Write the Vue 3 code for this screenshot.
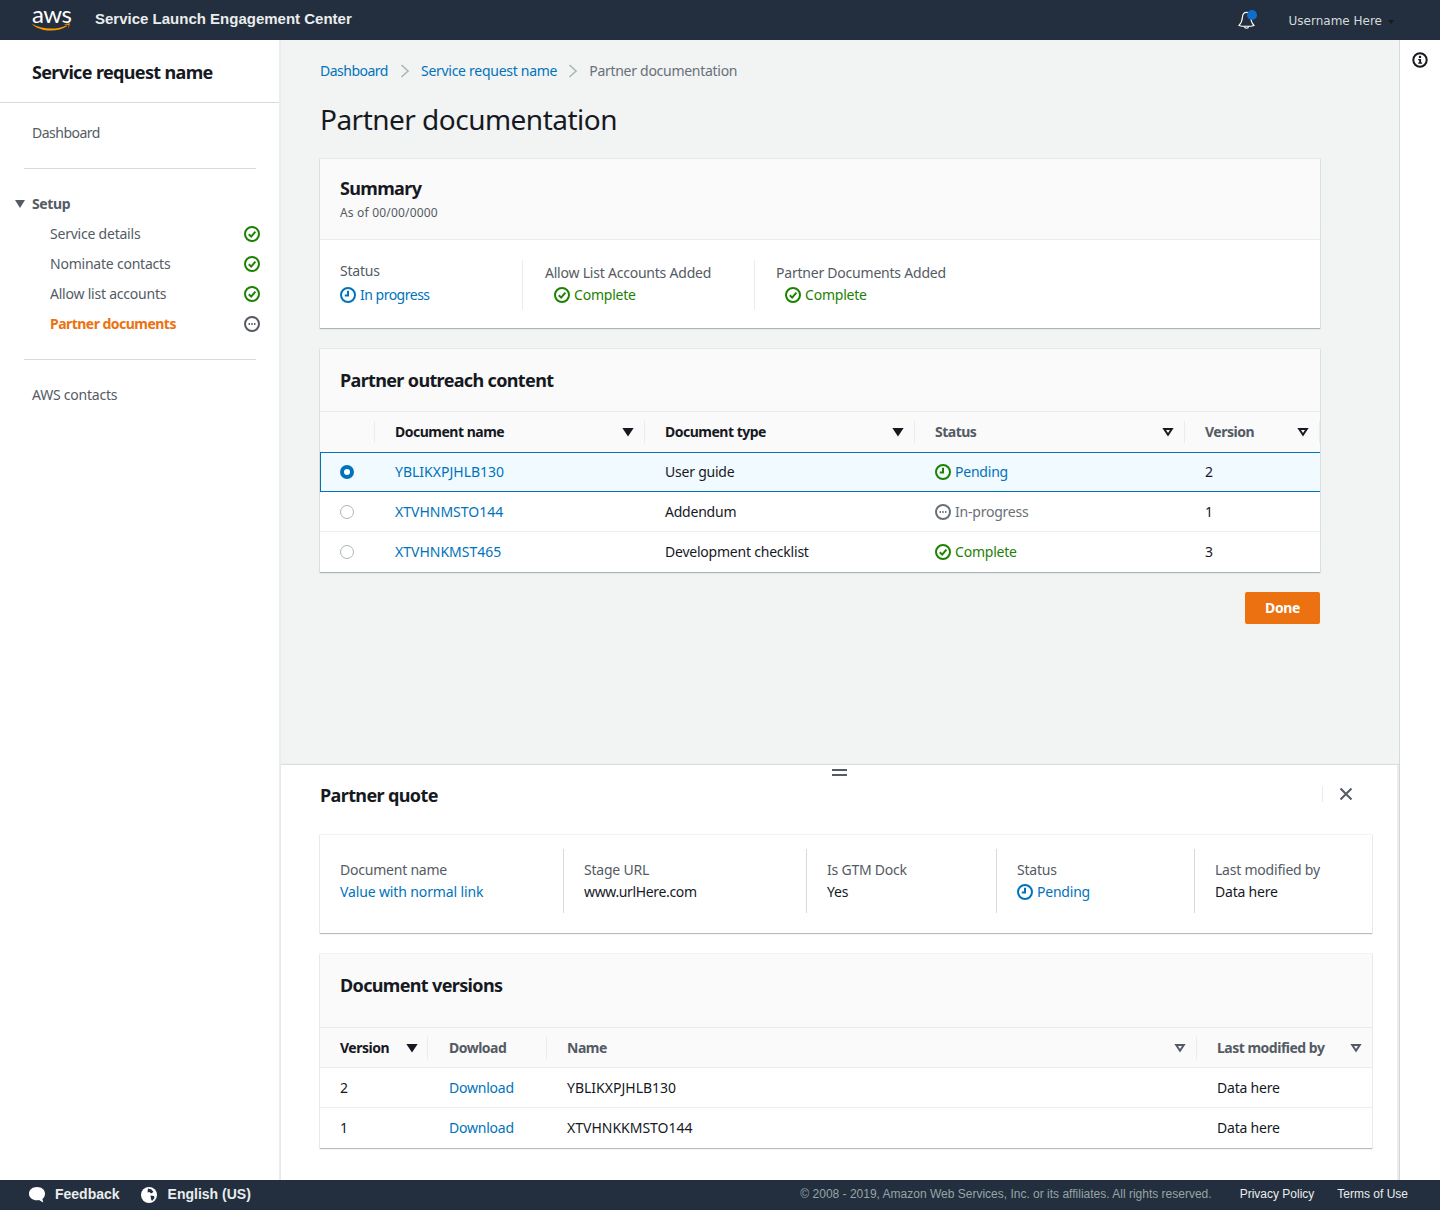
<script setup>
import { h } from 'vue'

const paths = {
  check: [['path', { d: 'M4.8 8.2 7.2 10.6 11.4 5.6' }]],
  clock: [['path', { d: 'M8 3.8V8.6H4.8' }]],
}
const colors = { green: '#1d8102', blue: '#0073bb', grey: '#687078', dark: '#545b64' }
const StatusIcon = (props) => {
  const kids = [h('circle', { cx: 8, cy: 8, r: 7 })]
  if (props.kind === 'dots') {
    kids.push(h('path', { d: 'M4.6 8h1.4M7.3 8h1.4M10 8h1.4', 'stroke-width': 1.8 }))
  } else {
    paths[props.kind].forEach(([t, a]) => kids.push(h(t, a)))
  }
  return h('svg', {
    width: 16, height: 16, viewBox: '0 0 16 16', fill: 'none',
    stroke: colors[props.color], 'stroke-width': 2, class: 'status-icon',
  }, kids)
}
const SortIcon = (props) => h('svg', {
  width: 10, height: 8, viewBox: '0 0 10 8', class: 'sort',
}, [h('path', {
  d: 'M1.200 1h7.600L5 6.800Z',
  fill: props.solid ? 'currentColor' : '#fafafa',
  stroke: 'currentColor',
  'stroke-width': 2,
})])

const setupLinks = [
  { label: 'Service details', kind: 'check', color: 'green' },
  { label: 'Nominate contacts', kind: 'check', color: 'green' },
  { label: 'Allow list accounts', kind: 'check', color: 'green' },
  { label: 'Partner documents', kind: 'dots', color: 'dark', active: true },
]
const outreachHead = [
  { label: 'Document name', solid: true, strong: true },
  { label: 'Document type', solid: true, strong: true },
  { label: 'Status', solid: false },
  { label: 'Version', solid: false },
]
const outreachRows = [
  { name: 'YBLIKXPJHLB130', type: 'User guide', status: 'Pending', kind: 'clock', icon: 'green', tone: 'blue', version: '2', selected: true },
  { name: 'XTVHNMSTO144', type: 'Addendum', status: 'In-progress', kind: 'dots', icon: 'grey', tone: 'grey', version: '1' },
  { name: 'XTVHNKMST465', type: 'Development checklist', status: 'Complete', kind: 'check', icon: 'green', tone: 'green', version: '3' },
]
const versionRows = [
  { version: '2', name: 'YBLIKXPJHLB130', by: 'Data here' },
  { version: '1', name: 'XTVHNKKMSTO144', by: 'Data here' },
]
</script>

<template>
  <div class="page">
    <header class="topbar">
      <div class="logo">
        <span class="logo-word">aws</span>
        <svg class="logo-smile" width="40" height="10" viewBox="0 0 40 10">
          <path d="M.5 1.500C10 7.500 26 8.300 35.500 3.200L36.200 4C27 10.500 9 10.500.5 1.500Z" fill="#ff9900" />
          <path d="M32.500 2.300 39 1.200 37.300 7.300 37.700 3Z" fill="#ff9900" />
        </svg>
      </div>
      <span class="app-name">Service Launch Engagement Center</span>
      <span class="spacer"></span>
      <span class="bell">
        <svg width="20" height="20" viewBox="0 0 20 20" fill="none" stroke="#fff" stroke-width="1.1">
          <path d="M9.500 2.400C6.600 2.400 5.600 4.700 5.400 7.400 5.200 10.400 4.400 13 2 15.400 5 16.600 14 16.600 17 15.400 14.600 13 13.900 10.400 13.700 7.400 13.500 4.700 12.400 2.400 9.500 2.400Z" />
          <path d="M7.400 16.400C7.600 18.900 11.400 18.900 11.600 16.400" />
        </svg>
        <span class="bell-dot"></span>
      </span>
      <span class="username">Username Here</span>
      <span class="user-caret"></span>
    </header>

    <div class="body">
      <nav class="sidebar">
        <h2 class="side-title">Service request name</h2>
        <div class="side-section">
          <a class="side-link tight">Dashboard</a>
        </div>
        <div class="setup">
          <div class="setup-head"><span class="tri"></span>Setup</div>
          <div v-for="l in setupLinks" :key="l.label" class="setup-row" :class="{ active: l.active }">
            <span>{{ l.label }}</span>
            <StatusIcon :kind="l.kind" :color="l.color" />
          </div>
        </div>
        <div class="side-section last">
          <a class="side-link">AWS contacts</a>
        </div>
      </nav>

      <div class="center">
        <main class="content">
          <div class="crumbs">
            <a class="tight">Dashboard</a>
            <svg width="10" height="14" viewBox="0 0 10 14" fill="none" stroke="#aab7b8" stroke-width="1.6"><path d="M1.500 1 8 7l-6.500 6" /></svg>
            <a>Service request name</a>
            <svg class="second-chevron" width="10" height="14" viewBox="0 0 10 14" fill="none" stroke="#aab7b8" stroke-width="1.6"><path d="M1.500 1 8 7l-6.500 6" /></svg>
            <span>Partner documentation</span>
          </div>
          <h1>Partner documentation</h1>

          <section class="card summary">
            <div class="card-head summary-head">
              <h2>Summary</h2>
              <p>As of 00/00/0000</p>
            </div>
            <div class="summary-body">
              <div class="sum-col first">
                <div class="label">Status</div>
                <div class="val blue tight"><StatusIcon kind="clock" color="blue" />In progress</div>
              </div>
              <div class="sum-col second">
                <div class="label">Allow List Accounts Added</div>
                <div class="val green inset"><StatusIcon kind="check" color="green" />Complete</div>
              </div>
              <div class="sum-col third">
                <div class="label">Partner Documents Added</div>
                <div class="val green inset"><StatusIcon kind="check" color="green" />Complete</div>
              </div>
            </div>
          </section>

          <section class="card outreach">
            <div class="card-head outreach-head"><h2>Partner outreach content</h2></div>
            <div class="thead outreach-grid">
              <div class="th"></div>
              <div v-for="c in outreachHead" :key="c.label" class="th sep" :class="{ strong: c.strong }">
                <span>{{ c.label }}</span>
                <SortIcon :solid="c.solid" />
              </div>
            </div>
            <div v-for="r in outreachRows" :key="r.name" class="tr outreach-grid" :class="{ selected: r.selected }">
              <div class="td"><span class="radio" :class="{ on: r.selected }"></span></div>
              <div class="td"><a class="code">{{ r.name }}</a></div>
              <div class="td">{{ r.type }}</div>
              <div class="td" :class="r.tone"><span class="val"><StatusIcon :kind="r.kind" :color="r.icon" />{{ r.status }}</span></div>
              <div class="td">{{ r.version }}</div>
            </div>
          </section>

          <div class="actions"><button class="done">Done</button></div>
        </main>

        <section class="split">
          <span class="handle"></span>
          <div class="split-head">
            <h2>Partner quote</h2>
            <span class="close">
              <svg width="14" height="14" viewBox="0 0 14 14" fill="none" stroke="#545b64" stroke-width="2"><path d="M1.500 1.500l11 11M12.500 1.500l-11 11" /></svg>
            </span>
          </div>

          <div class="card details">
            <div class="det-col c1"><div class="label">Document name</div><div class="blue loose">Value with normal link</div></div>
            <div class="det-col c2"><div class="label">Stage URL</div><div class="url">www.urlHere.com</div></div>
            <div class="det-col c3"><div class="label">Is GTM Dock</div><div>Yes</div></div>
            <div class="det-col c4"><div class="label">Status</div><div class="val blue"><StatusIcon kind="clock" color="blue" />Pending</div></div>
            <div class="det-col c5"><div class="label">Last modified by</div><div>Data here</div></div>
          </div>

          <section class="card versions">
            <div class="card-head versions-head"><h2>Document versions</h2></div>
            <div class="thead versions-grid">
              <div class="th strong"><span>Version</span><SortIcon :solid="true" /></div>
              <div class="th sep"><span>Dowload</span></div>
              <div class="th sep"><span>Name</span><SortIcon :solid="false" /></div>
              <div class="th sep"><span>Last modified by</span><SortIcon :solid="false" /></div>
            </div>
            <div v-for="r in versionRows" :key="r.version" class="tr versions-grid">
              <div class="td">{{ r.version }}</div>
              <div class="td"><a>Download</a></div>
              <div class="td code">{{ r.name }}</div>
              <div class="td">{{ r.by }}</div>
            </div>
          </section>
        </section>
      </div>

      <aside class="rail">
        <svg width="16" height="16" viewBox="0 0 16 16">
          <circle cx="8" cy="8" r="6.700" fill="none" stroke="#16191f" stroke-width="2" />
          <rect x="6.900" y="3.800" width="2.200" height="2.200" fill="#16191f" />
          <path d="M6.200 7h2.900v3.400h1v1.300H6.200v-1.300h1V8.300h-1z" fill="#16191f" />
        </svg>
      </aside>
    </div>

    <footer class="footer">
      <svg class="f-icon" width="18" height="18" viewBox="0 0 18 18" fill="#fff">
        <path d="M9 1c4.700 0 8 2.800 8 6.700 0 2.200-1 4-2.600 5.200l.8 3.500-4.200-2.400C6 15 1 12.400 1 7.700 1 3.800 4.300 1 9 1Z" />
      </svg>
      <span class="f-strong">Feedback</span>
      <svg class="f-icon globe" width="16" height="16" viewBox="0 0 16 16">
        <circle cx="8" cy="8" r="8" fill="#fff" />
        <path d="M7 1.500 10.500 2.500 12.500 5 10 6.500 8.500 5 6.500 5.500ZM9.500 8.500l3.500.5.500 2-2.500 3-1-2Z" fill="#232f3e" />
      </svg>
      <span class="f-strong">English (US)</span>
      <span class="spacer"></span>
      <span class="copy">© 2008 - 2019, Amazon Web Services, Inc. or its affiliates. All rights reserved.</span>
      <a class="f-link">Privacy Policy</a>
      <a class="f-link">Terms of Use</a>
    </footer>
  </div>
</template>

<style>
html, body { margin: 0; }
</style>

<style scoped>
.page {
  width: 1440px;
  height: 1210px;
  display: flex;
  flex-direction: column;
  overflow: hidden;
  font-family: "Noto Sans", "Open Sans", sans-serif;
  font-size: 14px;
  line-height: 22px;
  letter-spacing: -0.22px;
  color: #16191f;
  background: #fff;
}
h1, h2, p { margin: 0; }
.spacer { flex: 1; }
.blue { color: #0073bb; }
.green { color: #1d8102; }
.grey { color: #687078; }
a { color: #0073bb; }
.code { letter-spacing: 0; }
.tight { letter-spacing: -0.5px; }
.loose { letter-spacing: -0.13px; }
.url { letter-spacing: -0.35px; }
.status-icon { flex: none; }

.topbar {
  height: 40px;
  flex: none;
  background: #232f3e;
  display: flex;
  align-items: center;
  padding-left: 31px;
  color: #fff;
}
.logo { width: 64px; height: 40px; position: relative; flex: none; }
.logo-word {
  position: absolute;
  left: 1px;
  top: 3px;
  font: 400 24px/22px "Lato", sans-serif;
  letter-spacing: -0.5px;
  color: #fff;
}
.logo-smile { position: absolute; left: 0; top: 22px; }
.app-name { font: 700 15px/18px "Liberation Sans", sans-serif; letter-spacing: 0; color: #eaeded; margin-top: -3px; }
.bell { width: 20px; height: 20px; position: relative; margin-right: 32px; margin-top: -1px; }
.bell svg { display: block; }
.bell-dot {
  position: absolute;
  left: 10px;
  top: 0;
  width: 10px;
  height: 10px;
  border-radius: 50%;
  background: #0f6ec9;
}
.username { font: 400 12px/18px "DejaVu Sans", sans-serif; letter-spacing: 0; color: #d5dbdb; margin-top: 1px; }
.user-caret {
  width: 0;
  height: 0;
  margin: 3px 46px 0 6px;
  border: 3px solid transparent;
  border-top: 4px solid #16191f;
  border-bottom: 0;
}

.body { flex: 1; min-height: 0; display: flex; }

.sidebar {
  width: 281px;
  flex: none;
  box-sizing: border-box;
  border-right: 2px solid #eaeded;
  background: #fff;
  color: #545b64;
}
.side-title {
  height: 63px;
  box-sizing: border-box;
  padding: 20px 0 0 32px;
  font-size: 18px;
  line-height: 24px;
  font-weight: 700;
  letter-spacing: -0.65px;
  color: #16191f;
  border-bottom: 1px solid #d5dbdb;
}
.side-section { margin: 0 23px 0 24px; }
.side-link { display: block; color: #545b64; padding-left: 8px; }
.side-section:nth-of-type(1) { padding: 19px 0 24px; border-bottom: 1px solid #d5dbdb; }
.setup { padding-top: 24px; }
.setup-head {
  position: relative;
  height: 22px;
  padding-left: 32px;
  font-weight: 700;
  letter-spacing: -0.4px;
  color: #545b64;
}
.tri {
  position: absolute;
  left: 15px;
  top: 7px;
  width: 0;
  height: 0;
  border-left: 5px solid transparent;
  border-right: 5px solid transparent;
  border-top: 8px solid #545b64;
}
.setup-row {
  height: 30px;
  display: flex;
  align-items: center;
  justify-content: space-between;
  padding: 0 19px 0 50px;
  box-sizing: border-box;
}
.setup-head + .setup-row { margin-top: 4px; }
.setup-row.active { color: #ec7211; font-weight: 700; letter-spacing: -0.53px; }
.last { border-top: 1px solid #d5dbdb; margin-top: 20px; padding-top: 24px; }

.center { flex: 1; min-width: 0; display: flex; flex-direction: column; border-right: 1px solid #d5dbdb; }
.content { flex: 1; min-height: 0; background: #f2f3f3; padding: 20px 79px 0 39px; }
.crumbs { display: flex; align-items: center; height: 22px; color: #687078; letter-spacing: -0.28px; }
.crumbs .tight { letter-spacing: -0.5px; }
.crumbs svg { margin: 0 11px 0 12px; }
.crumbs .second-chevron { margin: 0 11px; }
h1 { font-size: 28px; line-height: 36px; font-weight: 400; letter-spacing: -0.52px; margin: 19px 0 22px; }

.card { background: #fff; box-shadow: 0 0 0 1px rgba(0,28,36,.05), 0 1px 1px 0 rgba(0,28,36,.25); }
.card-head { background: #fafafa; border-bottom: 1px solid #eaeded; box-sizing: border-box; padding-left: 20px; }
.card-head h2 { font-size: 18px; line-height: 24px; font-weight: 700; letter-spacing: -0.65px; }
.summary { height: 169px; }
.summary-head { height: 81px; padding-top: 17px; }
.summary-head p { font-size: 12px; line-height: 16px; letter-spacing: 0.19px; color: #545b64; margin-top: 5px; }
.summary-body { display: flex; padding-top: 20px; }
.sum-col { height: 50px; box-sizing: border-box; }
.sum-col.first { width: 202px; padding-left: 20px; }
.first .label { margin-bottom: 2px; }
.sum-col.second { width: 232px; padding-left: 22px; border-left: 1px solid #eaeded; padding-top: 2px; }
.sum-col.third { padding-left: 21px; border-left: 1px solid #eaeded; padding-top: 2px; }
.label { color: #545b64; }
.val { display: flex; align-items: center; gap: 4px; }
.inset { padding-left: 9px; }

.outreach { margin-top: 21px; }
.outreach-head { height: 63px; padding-top: 19px; }
.outreach-grid { display: grid; grid-template-columns: 55px 270px 270px 270px 135px; }
.thead { height: 40px; background: #fafafa; box-sizing: border-box; }
.th {
  position: relative;
  display: flex;
  align-items: center;
  justify-content: space-between;
  padding: 0 12px 0 20px;
  font-weight: 700;
  letter-spacing: -0.5px;
  color: #545b64;
}
.th.strong { color: #16191f; }
.outreach .th .sort { color: #16191f; }
.th.sep::before {
  content: "";
  position: absolute;
  left: -1px;
  top: 9px;
  height: 22px;
  width: 1px;
  background: #eaeded;
}
.outreach-grid .th:last-child::after {
  content: "";
  position: absolute;
  right: 0;
  top: 9px;
  height: 22px;
  width: 1px;
  background: #eaeded;
}
.sort { flex: none; display: block; overflow: visible; }
.tr { height: 40px; box-sizing: border-box; border-bottom: 1px solid #eaeded; }
.versions .thead { border-bottom: 1px solid #eaeded; }
.tr:last-child { border-bottom: 0; }
.td { display: flex; align-items: center; padding-left: 20px; }
.tr.selected {
  background: #f1faff;
  box-shadow: inset 1px 0 0 #0073bb;
  border-top: 1px solid #0073bb;
  border-bottom: 1px solid #0073bb;
}
.radio {
  width: 14px;
  height: 14px;
  box-sizing: border-box;
  border-radius: 50%;
  border: 1px solid #aab7b8;
  background: #fff;
}
.radio.on { border: 4px solid #0073bb; }
.actions { display: flex; justify-content: flex-end; margin-top: 20px; }
.done {
  width: 75px;
  height: 32px;
  border: 0;
  border-radius: 2px;
  background: #ec7211;
  color: #fff;
  font: 700 14px/22px "Noto Sans", sans-serif;
  letter-spacing: -0.4px;
  padding: 0;
}

.split {
  height: 415px;
  flex: none;
  position: relative;
  background: #fff;
  box-shadow: 0 -1px 1px rgba(0,28,36,.1);
  border-right: 2px solid #eaeded;
  padding: 0 25px 0 39px;
  box-sizing: border-box;
}
.handle {
  position: absolute;
  left: 551px;
  top: 4px;
  width: 15px;
  height: 3px;
  border-top: 2px solid #545b64;
  border-bottom: 2px solid #545b64;
}
.split-head { height: 70px; display: flex; align-items: flex-start; justify-content: space-between; padding-top: 18px; box-sizing: border-box; }
.split-head h2 { font-size: 18px; line-height: 24px; font-weight: 700; letter-spacing: -0.62px; }
.close {
  width: 50px;
  height: 16px;
  box-sizing: border-box;
  border-left: 1px solid #eaeded;
  margin-top: 3px;
  display: flex;
  align-items: center;
  padding-left: 16px;
}
.details {
  height: 98px;
  box-sizing: border-box;
  padding-top: 14px;
  display: grid;
  grid-template-columns: 243px 243px 190px 198px 1fr;
  align-items: start;
}
.det-col { height: 64px; box-sizing: border-box; padding: 10px 0 0 20px; border-left: 1px solid #d5dbdb; }
.det-col.c1 { border-left: 0; }
.versions { margin-top: 21px; }
.versions-head { height: 74px; padding-top: 19px; }
.versions-grid { display: grid; grid-template-columns: 108px 119px 650px 1fr; }
.versions-grid > :nth-child(2) { padding-left: 21px; }
.versions-grid .th:first-child { padding-right: 11px; }
.versions-grid .th:last-child { padding-right: 11px; }
.versions .th .sort { color: #545b64; }
.versions .th.strong .sort { color: #16191f; }

.rail { width: 40px; flex: none; background: #fff; display: flex; justify-content: center; padding-top: 12px; box-sizing: border-box; }

.footer {
  height: 30px;
  flex: none;
  background: #232f3e;
  display: flex;
  align-items: center;
  font-family: "Liberation Sans", sans-serif;
  letter-spacing: 0;
  color: #eaeded;
  padding: 0 32px 0 28px;
}
.footer span, .footer a { margin-top: -2px; }
.f-icon { flex: none; margin-right: 9px; }
.globe { margin-left: 21px; margin-right: 11px; }
.f-strong { font-weight: 700; font-size: 14px; }
.copy { font-size: 12px; color: #95a5a6; }
.f-link { font-size: 12px; color: #eaeded; margin-left: 28px; }
.f-link:last-child { margin-left: 23px; }
</style>
